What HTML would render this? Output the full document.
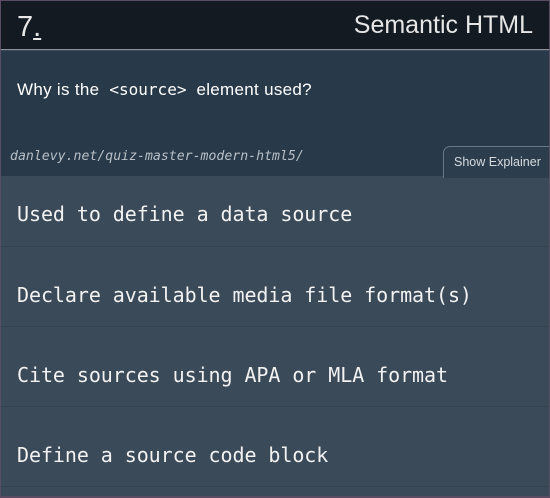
<!DOCTYPE html>
<html><head><style>
*{margin:0;padding:0;box-sizing:border-box}
body{width:550px;height:498px;background:#5a4d63;overflow:hidden;font-family:"Liberation Sans",sans-serif}
.wrap{position:absolute;left:1px;top:1px;width:548px;height:495px;background:#3a4a58;overflow:hidden}
.hdr{position:absolute;left:0;top:0;width:548px;height:49px;background:#131a22;border-bottom:1px solid #8a9199}
.num{position:absolute;left:16px;top:10px;color:#e8e8e8;font-size:29px}
.num span{text-decoration:underline}
.title{position:absolute;right:16px;top:10px;color:#e6e6e6;font-size:25px}
.q{position:absolute;left:0;top:50px;width:548px;height:125px;background:#283a4a}
.qt{position:absolute;left:16px;top:29px;color:#fff;font-size:17px;letter-spacing:0.3px}
.qt code{font-family:"DejaVu Sans Mono",monospace;font-size:16px;margin:0 5px;letter-spacing:0}
.url{position:absolute;left:9px;top:98px;color:#b8bfc6;font-family:"DejaVu Sans Mono",monospace;font-style:italic;font-size:13.2px}
.btn{position:absolute;left:442px;top:95px;width:110px;height:32px;border:1px solid #6a7885;border-bottom:none;border-radius:7px 0 0 0;background:#2c3e4e;color:#d6dadd;font-size:12.5px;padding:8px 0 0 10px}
.a{position:absolute;left:0;width:548px;border-bottom:1px solid #33424f;color:#f2f2f2;font-family:"DejaVu Sans Mono",monospace;font-size:20px;letter-spacing:-0.07px;padding-left:16px}
</style></head><body>
<div class="wrap">
<div class="hdr"><div class="num">7<span>.</span></div><div class="title">Semantic HTML</div></div>
<div class="q"><div class="qt">Why is the <code>&lt;source&gt;</code> element used?</div>
<div class="url">danlevy.net/quiz-master-modern-html5/</div>
<div class="btn">Show Explainer</div></div>
<div class="a" style="top:175px;height:71px;line-height:76px">Used to define a data source</div>
<div class="a" style="top:246px;height:80px;line-height:96px">Declare available media file format(s)</div>
<div class="a" style="top:326px;height:80px;line-height:96px">Cite sources using APA or MLA format</div>
<div class="a" style="top:406px;height:80px;line-height:96px">Define a source code block</div>
</div>
</body></html>
